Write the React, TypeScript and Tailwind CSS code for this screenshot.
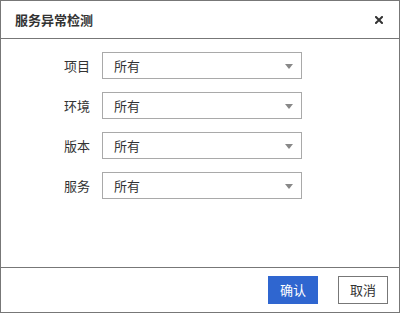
import React from 'react';

const rows = ['项目', '环境', '版本', '服务'];

function Select() {
  return (
    <div className="relative flex items-center w-[200px] h-[27px] border border-[#a9a9a9] bg-white pl-[11px] text-[13px] text-[#333]">
      <span>所有</span>
      <svg className="absolute right-[8px] top-[11px]" width="8" height="5" viewBox="0 0 8 5">
        <path d="M0 0 H8 L4 5 Z" fill="#888" />
      </svg>
    </div>
  );
}

export default function App() {
  return (
    <div
      className="w-[400px] h-[313px] flex flex-col border border-[#777] bg-white text-[#333]"
      style={{ fontFamily: '"Microsoft YaHei", "Noto Sans CJK SC", sans-serif' }}
    >
      <div className="h-[38px] flex items-center justify-between border-b border-[#777] pl-[14px] pr-[16px]">
        <span className="text-[13px] font-bold text-[#333]">服务异常检测</span>
        <svg width="8" height="8" viewBox="0 0 8 8">
          <path d="M1 1 L7 7 M7 1 L1 7" stroke="#333" strokeWidth="2" strokeLinecap="square" />
        </svg>
      </div>

      <div className="flex-1 flex flex-col gap-[13px] pt-[13px]">
        {rows.map((label) => (
          <div key={label} className="flex items-center">
            <div className="w-[101px] pr-[12px] text-right text-[13px]">{label}</div>
            <Select />
          </div>
        ))}
      </div>

      <div className="h-[45px] flex items-start justify-end gap-[20px] border-t border-[#777] pt-[8px] pr-[11px]">
        <button className="w-[50px] h-[28px] bg-[#2f66d0] text-white text-[13px]">确认</button>
        <button className="w-[50px] h-[28px] border border-[#777] bg-white text-[#333] text-[13px]">取消</button>
      </div>
    </div>
  );
}
